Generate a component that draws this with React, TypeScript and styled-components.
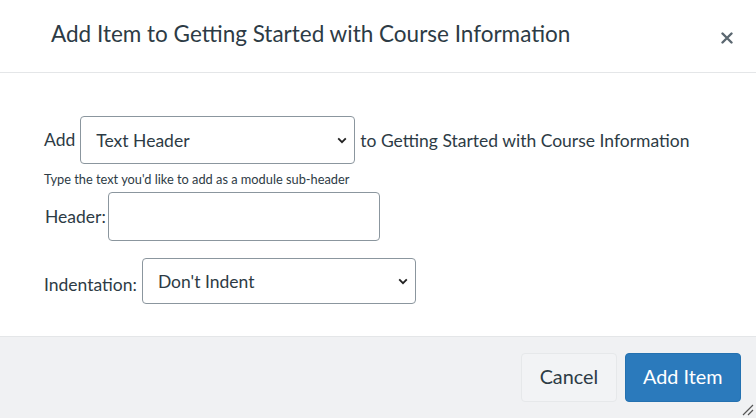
import React from "react";
import styled, { createGlobalStyle } from "styled-components";

const Global = createGlobalStyle`
  html, body { margin: 0; padding: 0; background: #fff; }
  body { font-family: Lato, "Open Sans", sans-serif; color: #2d3b45; }
`;

function App() {
  return (
    <>
      <Global />
      <Dialog>
        <Header>
          <Title>Add Item to Getting Started with Course Information</Title>
          <Close aria-label="Close">
            <svg width="12" height="12" viewBox="0 0 12 12">
              <path d="M1.5 1.5 L10.5 10.5 M10.5 1.5 L1.5 10.5" stroke="#5b6770" strokeWidth="2.4" strokeLinecap="round" />
            </svg>
          </Close>
        </Header>
        <Body>
          <AddRow>
            <Label>Add</Label>
            <Select $width={275} $height={48}>
              <span>Text Header</span>
              <Chevron />
            </Select>
            <Label>to Getting Started with Course Information</Label>
          </AddRow>
          <Hint>Type the text you'd like to add as a module sub-header</Hint>
          <HeaderRow>
            <Label>Header:</Label>
            <TextInput />
          </HeaderRow>
          <IndentRow>
            <Label>Indentation:</Label>
            <Select $width={274} $height={46}>
              <span>Don't Indent</span>
              <Chevron />
            </Select>
          </IndentRow>
        </Body>
        <Footer>
          <Button>Cancel</Button>
          <Button $primary>Add Item</Button>
          <Grip width="14" height="14" viewBox="0 0 14 14">
            <path d="M13 3 L3 13 M13 8 L8 13" stroke="#555" strokeWidth="1.2" />
          </Grip>
        </Footer>
      </Dialog>
    </>
  );
}

function Chevron() {
  return (
    <ChevronSvg width="10" height="7" viewBox="0 0 10 7">
      <path d="M1.2 1.3 L5 5.2 L8.8 1.3" stroke="#222" strokeWidth="1.8" fill="none" />
    </ChevronSvg>
  );
}

const Dialog = styled.div`
  width: 756px;
  height: 418px;
  display: flex;
  flex-direction: column;
  background: #fff;
`;

const Header = styled.div`
  height: 73px;
  box-sizing: border-box;
  border-bottom: 1px solid #e4e6e8;
  display: flex;
  align-items: center;
  justify-content: space-between;
  padding: 0 19px 0 51px;
`;

const Title = styled.h2`
  margin: 0 0 5px;
  font-size: 22.5px;
  font-weight: 400;
  color: #2d3b45;
`;

const Close = styled.div`
  width: 20px;
  height: 20px;
  display: flex;
  align-items: center;
  justify-content: center;
  margin-top: 3px;
`;

const Body = styled.div`
  flex: 1;
  padding: 43px 44px 0;
`;

const Label = styled.span`
  font-size: 17.5px;
  color: #2d3b45;
`;

const AddRow = styled.div`
  display: flex;
  align-items: center;
  gap: 5px;
  & > span:first-child { margin-top: -2px; }
`;

const Select = styled.div<{ $width: number; $height: number }>`
  width: ${(p) => p.$width}px;
  height: ${(p) => p.$height}px;
  box-sizing: border-box;
  border: 1px solid #8b969e;
  border-radius: 4px;
  display: flex;
  align-items: center;
  justify-content: space-between;
  padding: 0 7px 0 15px;
  font-size: 17.5px;
  color: #2d3b45;
  background: #fff;
`;

const ChevronSvg = styled.svg`
  display: block;
`;

const Hint = styled.div`
  font-size: 12.8px;
  margin: 7px 0 0;
  color: #2d3b45;
`;

const HeaderRow = styled.div`
  display: flex;
  align-items: center;
  margin-top: 5px;
  padding-left: 1px;
`;

const TextInput = styled.div`
  width: 272px;
  height: 49px;
  box-sizing: border-box;
  border: 1px solid #8b969e;
  border-radius: 4px;
  margin-left: 2px;
`;

const IndentRow = styled.div`
  display: flex;
  align-items: center;
  gap: 5px;
  margin-top: 17px;
  & > span:first-child { margin-top: 6px; }
`;

const Footer = styled.div`
  position: relative;
  height: 82px;
  box-sizing: border-box;
  background: #f0f1f3;
  border-top: 1px solid #e4e6e8;
  display: flex;
  align-items: center;
  justify-content: flex-end;
  gap: 8px;
  padding: 0 15px 0 0;
`;

const Button = styled.div<{ $primary?: boolean }>`
  height: 49px;
  box-sizing: border-box;
  display: flex;
  align-items: center;
  padding: 0 17.5px 4px;
  border-radius: 4px;
  font-size: 19.8px;
  background: ${(p) => (p.$primary ? "#2b7abc" : "#f2f3f5")};
  color: ${(p) => (p.$primary ? "#fff" : "#2d3b45")};
  border: 1px solid ${(p) => (p.$primary ? "#2471b0" : "#e6e8ea")};
`;

const Grip = styled.svg`
  position: absolute;
  right: 2px;
  bottom: 2px;
`;

export default App;
